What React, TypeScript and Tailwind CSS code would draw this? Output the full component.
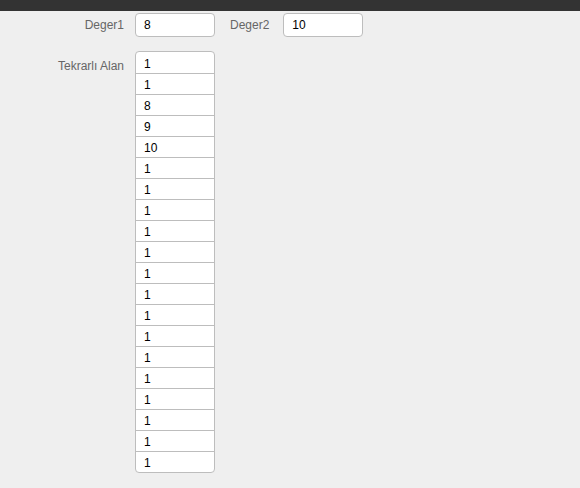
const values = ['1', '1', '8', '9', '10', ...Array(15).fill('1')];

export default function App() {
  return (
    <div className="min-h-[488px] w-[580px] bg-[#efefef] font-['Liberation_Sans',Arial,sans-serif] text-[12px]">
      <div className="h-[11px] bg-[#333333]" />
      <div className="flex items-center pt-[2px]">
        <label className="w-[124px] text-right text-[#666]">Deger1</label>
        <input
          readOnly
          value="8"
          className="ml-[11px] h-[24px] w-[80px] rounded-[4px] border border-[#bdbdbd] bg-white px-[8px] text-[12px] text-black outline-none"
        />
        <label className="ml-[15px] text-[#666]">Deger2</label>
        <input
          readOnly
          value="10"
          className="ml-[14px] h-[24px] w-[80px] rounded-[4px] border border-[#bdbdbd] bg-white px-[8px] text-[12px] text-black outline-none"
        />
      </div>
      <div className="mt-[14px] flex items-start">
        <label className="w-[124px] pt-[6px] text-right text-[#666]">Tekrarlı Alan</label>
        <div className="ml-[11px] w-[80px] overflow-hidden rounded-[4px] border border-[#bdbdbd] bg-white">
          {values.map((v, i) => (
            <div
              key={i}
              className={`flex h-[21px] items-center px-[8px] pt-[2px] text-black ${i > 0 ? 'border-t border-[#bdbdbd]' : ''}`}
            >
              {v}
            </div>
          ))}
        </div>
      </div>
    </div>
  );
}
